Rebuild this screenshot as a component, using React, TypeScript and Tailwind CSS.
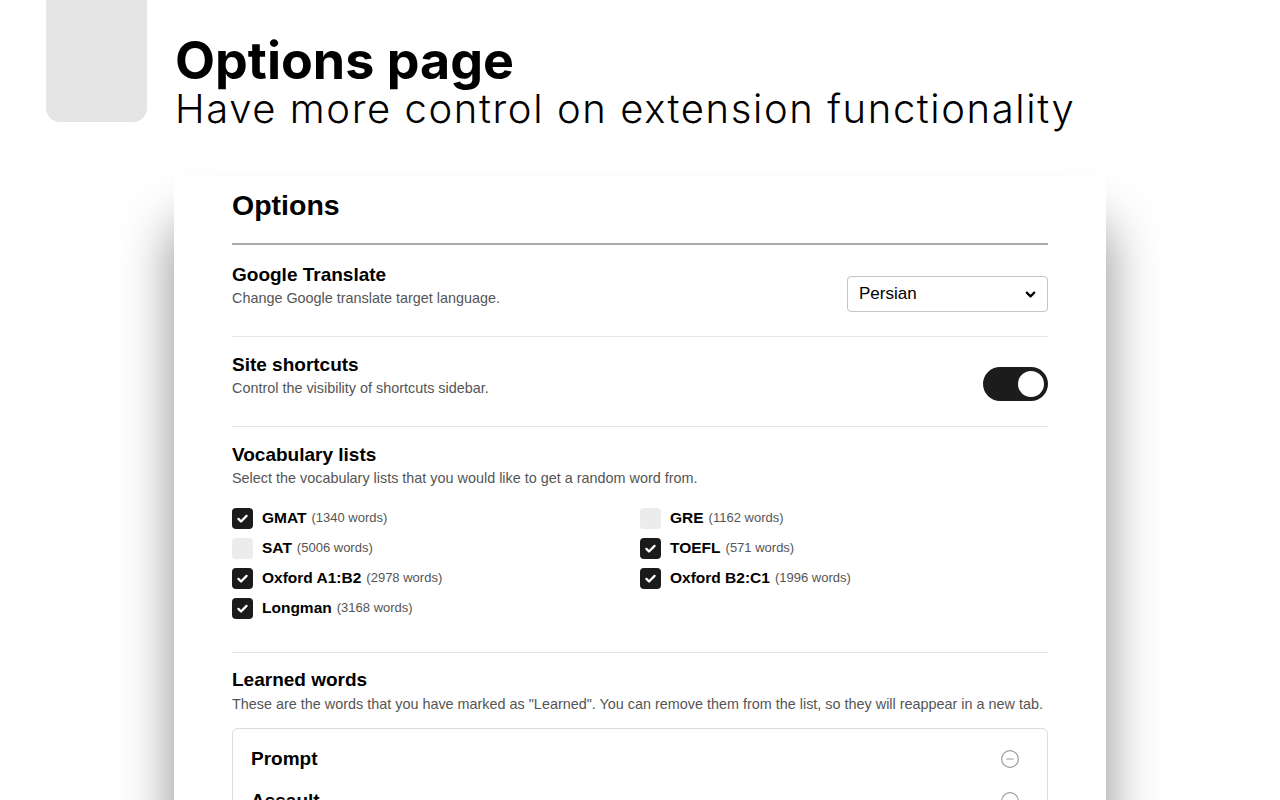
import { ChevronDown, CircleMinus } from "lucide-react";

const lists = [
  { name: "GMAT", count: 1340, checked: true },
  { name: "GRE", count: 1162, checked: false },
  { name: "SAT", count: 5006, checked: false },
  { name: "TOEFL", count: 571, checked: true },
  { name: "Oxford A1:B2", count: 2978, checked: true },
  { name: "Oxford B2:C1", count: 1996, checked: true },
  { name: "Longman", count: 3168, checked: true },
];

const learned = ["Prompt", "Assault"];

function CheckBox({ checked }: { checked: boolean }) {
  if (!checked) {
    return <span className="h-[21px] w-[21px] shrink-0 rounded-[4px] bg-[#ececec]" />;
  }
  return (
    <span className="flex h-[21px] w-[21px] shrink-0 items-center justify-center rounded-[4px] bg-[#1b1b1b]">
      <svg viewBox="0 0 16 16" className="h-[13px] w-[13px]">
        <path
          d="M3 8.5l3.2 3.2L13 4.8"
          fill="none"
          stroke="white"
          strokeWidth="2.8"
          strokeLinecap="round"
          strokeLinejoin="round"
        />
      </svg>
    </span>
  );
}

function Section({
  title,
  desc,
  first,
  children,
  right,
}: {
  title: string;
  desc: string;
  first?: boolean;
  children?: React.ReactNode;
  right?: React.ReactNode;
}) {
  return (
    <div className={first ? "pt-[19px] pb-[29px]" : "border-t border-[#e6e6e6] pt-[17px] pb-[29px]"}>
      <div className="flex h-[43px] items-start justify-between">
        <div>
          <h3 className="text-[19px] leading-[22px] font-bold text-black">{title}</h3>
          <p className="mt-[3px] text-[14.4px] leading-[18px] text-[#555]">{desc}</p>
        </div>
        {right}
      </div>
      {children}
    </div>
  );
}

export default function App() {
  return (
    <div className="h-[800px] overflow-hidden bg-white">
      <header className="flex h-[176px] items-start">
        <div className="ml-[46px] h-[122px] w-[101px] shrink-0 rounded-b-[14px] bg-[#e5e5e5]" />
        <div className="ml-[28px] pt-[36px] font-['Inter',sans-serif] text-black">
          <h1 className="text-[52px] leading-[50px] font-bold">Options page</h1>
          <p className="text-[40px] leading-[45px] font-light tracking-[1.6px] whitespace-nowrap">
            Have more control on extension functionality
          </p>
        </div>
      </header>

      <main className="ml-[174px] w-[932px] bg-white px-[58px] pt-[12px] pb-10 font-['Liberation_Sans',Arial,sans-serif] shadow-[0_50px_50px_rgba(0,0,0,0.45)]">
        <h2 className="text-[28.5px] leading-[34px] font-bold text-black">Options</h2>
        <div className="mt-[21px] h-[2px] bg-[#a9a9a9]" />

        <Section
          first
          title="Google Translate"
          desc="Change Google translate target language."
          right={
            <div className="mt-[12px] flex h-[36px] w-[201px] shrink-0 items-center justify-between rounded-[4px] border border-[#c4c4c4] pr-[9px] pl-[11px]">
              <span className="text-[17px] text-black">Persian</span>
              <ChevronDown className="h-[15px] w-[15px] text-black" strokeWidth={3.5} />
            </div>
          }
        />

        <Section
          title="Site shortcuts"
          desc="Control the visibility of shortcuts sidebar."
          right={
            <div className="mt-[13px] flex h-[34px] w-[65px] shrink-0 items-center justify-end rounded-full bg-[#1c1c1c] pr-[4px]">
              <span className="h-[26px] w-[26px] rounded-full bg-white" />
            </div>
          }
        />

        <Section
          title="Vocabulary lists"
          desc="Select the vocabulary lists that you would like to get a random word from."
        >
          <div className="mt-[16px] grid grid-cols-2">
            {lists.map((l) => (
              <div key={l.name} className="flex h-[30px] items-center">
                <CheckBox checked={l.checked} />
                <span className="ml-[9px] text-[15.5px] font-bold text-black">{l.name}</span>
                <span className="ml-[5px] text-[13px] text-[#555]">({l.count} words)</span>
              </div>
            ))}
          </div>
        </Section>

        <div className="border-t border-[#e6e6e6] pt-[16px]">
          <h3 className="text-[19px] leading-[22px] font-bold text-black">Learned words</h3>
          <p className="mt-[4px] text-[14.4px] leading-[18px] text-[#555]">
            These are the words that you have marked as "Learned". You can remove them from the list, so they will
            reappear in a new tab.
          </p>
          <div className="mt-[15px] rounded-[6px] border border-[#dcdcdc] pt-[9px] pr-[27px] pl-[18px]">
            {learned.map((w) => (
              <div key={w} className="flex h-[42px] items-center justify-between">
                <span className="text-[19px] font-bold text-black">{w}</span>
                <CircleMinus className="h-[20px] w-[20px] text-[#9a9a9a]" strokeWidth={1.4} />
              </div>
            ))}
          </div>
        </div>
      </main>
    </div>
  );
}
